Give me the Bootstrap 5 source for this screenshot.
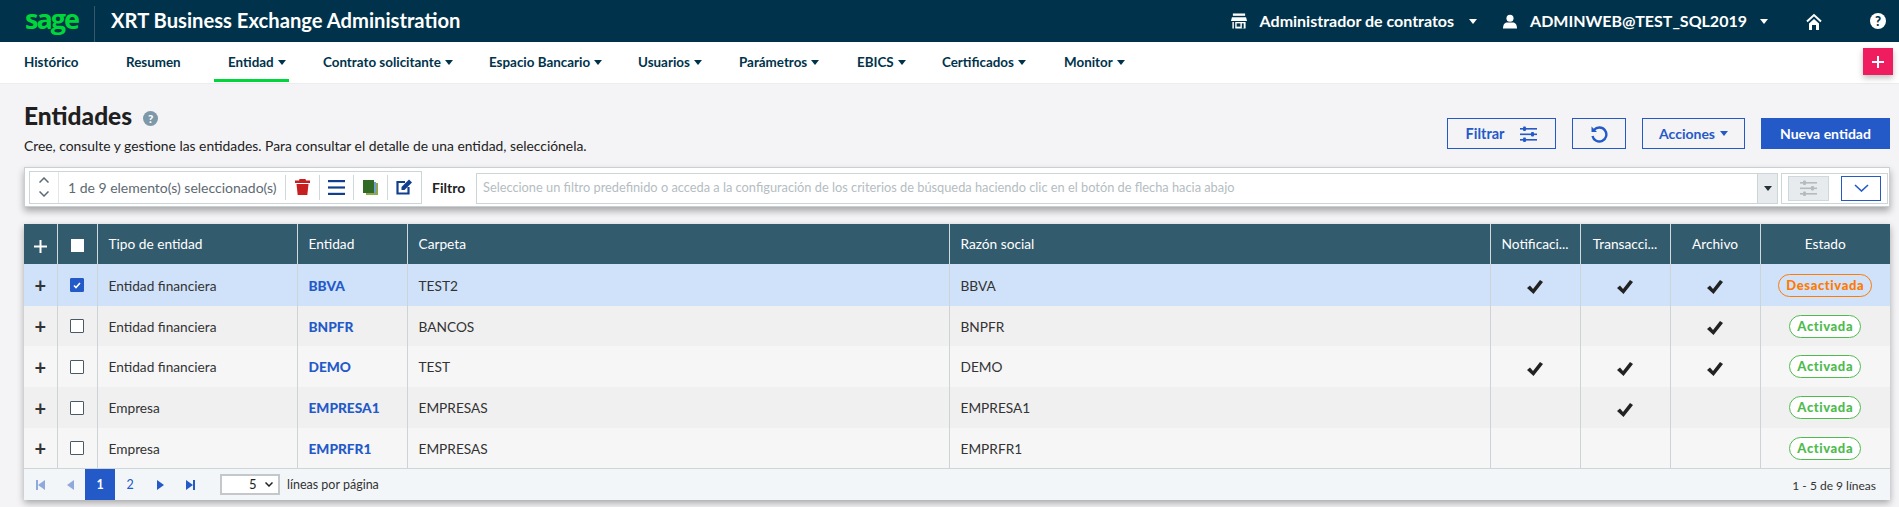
<!DOCTYPE html>
<html lang="es">
<head>
<meta charset="utf-8">
<title>Entidades</title>
<link href="https://cdn.jsdelivr.net/npm/bootstrap@5.3.0/dist/css/bootstrap.min.css" rel="stylesheet">
<style>
html,body{height:507px;overflow:hidden}
body{background:#f4f4f6;font-family:Lato,"Liberation Sans",sans-serif;font-size:14px;color:#222}
.topbar{height:42px;background:#00334b;color:#fff;padding:0 0 0 25px}
.sage-logo{font-family:"Open Sans",sans-serif;font-weight:700;font-size:27px;letter-spacing:-2px;color:#00d639;line-height:42px;width:69px;padding-bottom:5px}
.top-sep{width:1px;height:36px;background:#35586a;margin-top:6px;margin-right:16px;align-self:flex-start}
.app-title{font-weight:700;font-size:20.200px;line-height:1;padding-bottom:2px}
.top-item{font-weight:700;font-size:16px;line-height:1}
.top-caret{display:inline-block;border-left:4px solid transparent;border-right:4px solid transparent;border-top:5px solid #fff;margin-left:13px}
.menu-bar{height:42px;background:#fff;border-bottom:1px solid #ececee}
.menu-link{font-size:13.400px;font-weight:700;color:#00334b;padding:0;line-height:41px;height:40px;text-decoration:none;white-space:nowrap}
.menu-slot{position:relative;display:flex;justify-content:flex-start;height:40px}
.menu-slot.is-on::after{content:"";position:absolute;left:-14px;right:-14px;bottom:0;height:3px;background:#00d639}
.menu-caret{display:inline-block;border-left:4px solid transparent;border-right:4px solid transparent;border-top:5px solid #00334b;margin-left:4px;vertical-align:2px}
.add-btn{position:absolute;left:1863px;top:48px;width:30px;height:27px;background:#ef1d5f;box-shadow:0 3px 6px rgba(0,0,0,.25);color:#fff;z-index:3}
.page-body{padding:0 9px 0 24px}
.page-head{height:83px}
.page-title{font-size:24.500px;font-weight:900;line-height:28px;margin:18px 0 0;color:#1f1f1f}
.help-dot{width:15px;height:15px;border-radius:50%;background:#7d98a8;color:#fff;font-size:11.500px;font-weight:900;line-height:15px;text-align:center;margin:5px 0 0 11px}
.page-sub{font-size:13.850px;line-height:18px;margin:7px 0 0;color:#222}
.head-btn{height:31px;border:1px solid #2459c8;border-radius:0;color:#2459c8;background:transparent;font-weight:700;font-size:14px;padding:0;display:flex;align-items:center;justify-content:center}
.head-btn.solid{background:#2459c8;color:#fff}
.btn-f{width:109px;gap:16px;font-size:14.500px}.btn-r{width:54px}.btn-a{width:103px}.btn-n{width:129px}
.filter-bar{height:40px;background:#fff;border:1px solid #c9d0d3;box-shadow:0 4px 7px rgba(0,0,0,.32);padding:3px 4px;margin-bottom:17px}
.sel-box{width:393px;height:33px;border:1px solid #ccd6d9;flex:none}
.sel-arrows{width:29px;border-right:1px solid #e1e6e8;height:100%}
.sel-text{width:227px;padding-left:9px;font-size:14px;color:#5d6a72;white-space:nowrap;height:100%}
.sel-icon{width:34px;height:25px;border-left:1px solid #cfd8dc}
.filt-label{font-weight:700;font-size:14px;width:54px;padding-left:10px;flex:none;color:#222}
.filt-input{width:1302px;height:31px;border:1px solid #ccd6d9;flex:none;padding-left:6px;color:#b4bdc2;font-size:12.800px;white-space:nowrap;margin-top:2px}
.filt-arrow{width:20px;height:100%;background:#e7ebed;border-left:1px solid #ccd6d9}
.dark-caret{display:inline-block;border-left:4px solid transparent;border-right:4px solid transparent;border-top:5px solid #263238}
.filt-right{width:107px;height:31px;border:1px solid #ccd6d9;flex:none;margin-left:3px;margin-top:2px;padding:0 6px;gap:12px}
.mini-gray{width:41px;height:25px;background:#e7ebed;border:1px solid #cfd8dc}
.mini-blue{width:40px;height:25px;border:1px solid #2459c8;background:#fff}
.grid-wrap{box-shadow:0 3px 7px rgba(0,0,0,.32);width:1866px;background:#f3f6f8}
.grid-table{table-layout:fixed;width:1866px;margin:0;font-size:13.700px;--bs-table-bg:transparent;border-collapse:collapse}
.grid-table th{height:40px;background:#335b6e;color:#fff;font-weight:400;font-size:13.700px;padding:0 11px;vertical-align:middle;border:0;border-left:1px solid #cfd9de;white-space:nowrap;overflow:hidden;text-overflow:ellipsis}
.grid-table td{padding:2px 11px 0;vertical-align:middle;border:0;border-left:1px solid #ccd4d8;color:#333;background:transparent;white-space:nowrap}
.grid-table th:first-child,.grid-table td:first-child{border-left:0;padding:0;text-align:center}
.grid-table th:nth-child(-n+2){padding-top:3px}
.grid-table td:nth-child(2),.grid-table td:last-child{padding-top:0}
.grid-table tbody tr:nth-child(1){height:42px;background:#cfe2fa}
.grid-table tbody tr:nth-child(2){height:40px;background:#f0f0f0}
.grid-table tbody tr:nth-child(3){height:41px;background:#f6f6f7}
.grid-table tbody tr:nth-child(4){height:41px;background:#f0f0f1}
.grid-table tbody tr:nth-child(5){height:40px;background:#f6f6f7}
.cen{text-align:center}
.ent-link{font-weight:900;color:#2459c8;text-decoration:none}
.row-plus{font-size:20px;font-weight:700;line-height:1;color:#222}
.tick-box{display:block;width:14px;height:14px;border:1px solid #4a5a64;background:#fff;border-radius:1px;margin:0 auto;padding:0}
.tick-box.is-on{background:#2459c8;border-color:#2459c8}
.head-box{display:block;width:13px;height:13px;background:#fff;margin:0 auto}
.state-pill{display:inline-block;font-size:13px;font-weight:900;letter-spacing:.600px;border-radius:12px;background:#fff;padding:0 7px;line-height:21px;border:1px solid #4fbb4f;color:#4fbb4f}
.state-pill.off{background:transparent;border-color:#ff7a00;color:#ff7a00}
.grid-foot{height:32px;border-top:1px solid #cfd6da;padding-right:14px;padding-left:1px;font-size:12.500px;color:#333}
.pg-cell{width:30px;height:100%;color:#2459c8}
.pg-cell.on{background:#2459c8;color:#fff;font-weight:700;padding-top:2px}
.pg-num{padding-top:2px}
.foot-txt{padding-top:2px}
.size-sel{width:60px;height:21px;border:2px solid #c4c8ca;background:#fff;margin-left:15px;margin-right:7px;font-size:13px;padding-left:27px;color:#222}
</style>
</head>
<body>
<header class="topbar d-flex align-items-center">
  <div class="sage-logo">sage</div>
  <div class="top-sep"></div>
  <div class="app-title">XRT Business Exchange Administration</div>
  <div class="ms-auto d-flex align-items-center top-item" style="margin-right:13px">
    <svg width="16" height="16" viewBox="0 0 17 16" fill="#fff" style="margin-right:13px"><rect x="2" y="0" width="13" height="2.500"/><path d="M1 4h15l1 4H0z"/><path d="M1.500 9H3v7H1.500zM4.500 9h11v7h-11z"/><rect x="6" y="10.500" width="4" height="3.500" fill="#00334b"/><rect x="11.500" y="10.500" width="2" height="5.500" fill="#00334b"/></svg>
    <span>Administrador de contratos</span><span class="top-caret" style="margin-left:15px"></span>
    <svg width="14" height="15" viewBox="0 0 15 15" fill="#fff" style="margin-left:26px;margin-right:13px"><circle cx="7.500" cy="4" r="3.800"/><path d="M0 15c0-5 2.500-6.500 4.500-6.500h6C12.500 8.500 15 10 15 15z"/></svg>
    <span>ADMINWEB@TEST_SQL2019</span><span class="top-caret"></span>
    <svg width="16" height="17" viewBox="0 0 16 17" style="margin-left:38px"><path d="M1 8.500 8 2l7 6.500" fill="none" stroke="#fff" stroke-width="2"/><path d="M3 10.500 8 6l5 4.500V17h-3v-5H6v5H3z" fill="#fff"/></svg>
    <svg width="16" height="16" viewBox="0 0 17 17" style="margin-left:48px"><circle cx="8.500" cy="8.500" r="8.500" fill="#fff"/><text x="8.500" y="13.500" text-anchor="middle" font-family="Lato" font-weight="900" font-size="14" fill="#00334b">?</text></svg>
  </div>
</header>
<nav class="menu-bar d-flex" aria-label="Principal">
  <div class="menu-slot" style="margin-left:24px;width:102px"><a class="menu-link" href="#">Histórico</a></div>
  <div class="menu-slot" style="width:102px"><a class="menu-link" href="#">Resumen</a></div>
  <div class="menu-slot is-on" style="width:47px;margin-right:48px"><a class="menu-link" href="#">Entidad<span class="menu-caret"></span></a></div>
  <div class="menu-slot" style="width:166px"><a class="menu-link" href="#">Contrato solicitante<span class="menu-caret"></span></a></div>
  <div class="menu-slot" style="width:149px"><a class="menu-link" href="#">Espacio Bancario<span class="menu-caret"></span></a></div>
  <div class="menu-slot" style="width:101px"><a class="menu-link" href="#">Usuarios<span class="menu-caret"></span></a></div>
  <div class="menu-slot" style="width:118px"><a class="menu-link" href="#">Parámetros<span class="menu-caret"></span></a></div>
  <div class="menu-slot" style="width:85px"><a class="menu-link" href="#">EBICS<span class="menu-caret"></span></a></div>
  <div class="menu-slot" style="width:122px"><a class="menu-link" href="#">Certificados<span class="menu-caret"></span></a></div>
  <div class="menu-slot"><a class="menu-link" href="#">Monitor<span class="menu-caret"></span></a></div>
</nav>
<button class="add-btn btn p-0 border-0 rounded-0 d-flex align-items-center justify-content-center" type="button" aria-label="Añadir"><svg width="12" height="12" viewBox="0 0 12 12"><path d="M5 0h2v5h5v2H7v5H5V7H0V5h5z" fill="#fff"/></svg></button>
<main class="page-body">
  <div class="page-head d-flex justify-content-between">
    <div>
      <h1 class="page-title d-flex align-items-center">Entidades<span class="help-dot">?</span></h1>
      <p class="page-sub">Cree, consulte y gestione las entidades. Para consultar el detalle de una entidad, selecciónela.</p>
    </div>
    <div class="d-flex align-items-end" style="gap:16px;padding-bottom:18px">
      <button class="head-btn btn-f" type="button">Filtrar
        <svg width="17" height="16" viewBox="0 0 17 16" fill="#2459c8"><rect y="2" width="17" height="1.600"/><rect y="7.500" width="17" height="1.600"/><rect y="13" width="17" height="1.600"/><rect x="3" y="0.500" width="3" height="4.500" rx="1"/><rect x="11" y="6" width="3" height="4.500" rx="1"/><rect x="3" y="11.500" width="3" height="4.500" rx="1"/></svg></button>
      <button class="head-btn btn-r" type="button" aria-label="Recargar"><svg width="18" height="18" viewBox="0 0 18 18" fill="none" stroke="#2459c8" stroke-width="2.400"><path d="M4 5a7 7 0 1 1-1.500 6"/><path d="M1.500 1.500 1.500 7 7 7z" fill="#2459c8" stroke="none"/></svg></button>
      <button class="head-btn btn-a" type="button">Acciones<span class="menu-caret" style="border-top-color:#2459c8;margin-left:5px;vertical-align:0"></span></button>
      <button class="head-btn btn-n solid" type="button">Nueva entidad</button>
    </div>
  </div>
  <section class="filter-bar d-flex align-items-center">
    <div class="sel-box d-flex align-items-center">
      <div class="sel-arrows d-flex flex-column align-items-center justify-content-center gap-2">
        <svg width="10" height="6" viewBox="0 0 10 6" fill="none" stroke="#5a6b75" stroke-width="1.500"><path d="M.500 5.500 5 1l4.500 4.500"/></svg>
        <svg width="10" height="6" viewBox="0 0 10 6" fill="none" stroke="#5a6b75" stroke-width="1.500"><path d="M.500.500 5 5 9.500.500"/></svg>
      </div>
      <div class="sel-text d-flex align-items-center">1 de 9 elemento(s) seleccionado(s)</div>
      <div class="sel-icon d-flex align-items-center justify-content-center"><svg width="15" height="16" viewBox="0 0 15 16" fill="#c71f1f"><path d="M4.500 0h6l.5 1.500h4V4H0V1.500h4z"/><path d="M1.500 5h12l-1.200 11H2.700z"/></svg></div>
      <div class="sel-icon d-flex align-items-center justify-content-center"><svg width="17" height="15" viewBox="0 0 17 15" fill="#113f8e"><rect width="17" height="2.200"/><rect y="6.400" width="17" height="2.200"/><rect y="12.800" width="17" height="2.200"/></svg></div>
      <div class="sel-icon d-flex align-items-center justify-content-center"><svg width="15" height="15" viewBox="0 0 15 15"><rect x="3" y="3" width="12" height="12" fill="#8fa84f"/><rect x="11" y="2" width="2" height="11" fill="#6f9ed0"/><rect width="11" height="13" fill="#2f6b24"/></svg></div>
      <div class="sel-icon d-flex align-items-center justify-content-center"><svg width="17" height="16" viewBox="0 0 17 16"><path d="M9 3H1.500v11.500h11V8" fill="none" stroke="#113f8e" stroke-width="2.200"/><path d="M5.500 8 13 .5l3 3L8.500 11H5.500z" fill="#113f8e"/></svg></div>
    </div>
    <div class="filt-label">Filtro</div>
    <div class="filt-input d-flex align-items-center justify-content-between pe-0">
      <span>Seleccione un filtro predefinido o acceda a la configuración de los criterios de búsqueda haciendo clic en el botón de flecha hacia abajo</span>
      <span class="filt-arrow d-flex align-items-center justify-content-center"><span class="dark-caret"></span></span>
    </div>
    <div class="filt-right d-flex align-items-center">
      <span class="mini-gray d-flex align-items-center justify-content-center"><svg width="17" height="16" viewBox="0 0 17 16" fill="#b4babd"><rect y="2" width="17" height="1.600"/><rect y="7.500" width="17" height="1.600"/><rect y="13" width="17" height="1.600"/><rect x="3" y="0.500" width="3" height="4.500" rx="1"/><rect x="11" y="6" width="3" height="4.500" rx="1"/><rect x="3" y="11.500" width="3" height="4.500" rx="1"/></svg></span>
      <span class="mini-blue d-flex align-items-center justify-content-center"><svg width="15" height="8" viewBox="0 0 15 8" fill="none" stroke="#2459c8" stroke-width="1.600"><path d="M1 1l6.500 6L14 1"/></svg></span>
    </div>
  </section>
  <section class="grid-wrap">
    <table class="table grid-table">
      <colgroup><col style="width:33px"><col style="width:40px"><col style="width:200px"><col style="width:110px"><col style="width:542px"><col style="width:541px"><col style="width:90px"><col style="width:90px"><col style="width:90px"><col style="width:130px"></colgroup>
      <thead><tr>
        <th><svg width="13" height="13" viewBox="0 0 13 13"><path d="M5.500 0h2v5.500H13v2H7.500V13h-2V7.500H0v-2h5.500z" fill="#fff"/></svg></th>
        <th><span class="head-box"></span></th>
        <th>Tipo de entidad</th><th>Entidad</th><th>Carpeta</th><th>Razón social</th>
        <th class="cen">Notificaci...</th><th class="cen">Transacci...</th><th class="cen">Archivo</th><th class="cen">Estado</th>
      </tr></thead>
      <tbody>
        <tr><td class="row-plus">+</td><td><span class="tick-box is-on d-flex align-items-center justify-content-center"><svg width="8" height="7" viewBox="0 0 8 7" fill="none" stroke="#fff" stroke-width="1.600"><path d="M1 3.500 3 5.500 7 1"/></svg></span></td><td>Entidad financiera</td><td><a class="ent-link" href="#">BBVA</a></td><td>TEST2</td><td>BBVA</td>
          <td class="cen"><svg width="16" height="14" viewBox="0 0 16 14"><path d="M0 8 3 5.500 6 9l7-9 3 2L6.500 14z" fill="#222"/></svg></td><td class="cen"><svg width="16" height="14" viewBox="0 0 16 14"><path d="M0 8 3 5.500 6 9l7-9 3 2L6.500 14z" fill="#222"/></svg></td><td class="cen"><svg width="16" height="14" viewBox="0 0 16 14"><path d="M0 8 3 5.500 6 9l7-9 3 2L6.500 14z" fill="#222"/></svg></td><td class="cen"><span class="state-pill off">Desactivada</span></td></tr>
        <tr><td class="row-plus">+</td><td><span class="tick-box"></span></td><td>Entidad financiera</td><td><a class="ent-link" href="#">BNPFR</a></td><td>BANCOS</td><td>BNPFR</td>
          <td></td><td></td><td class="cen"><svg width="16" height="14" viewBox="0 0 16 14"><path d="M0 8 3 5.500 6 9l7-9 3 2L6.500 14z" fill="#222"/></svg></td><td class="cen"><span class="state-pill">Activada</span></td></tr>
        <tr><td class="row-plus">+</td><td><span class="tick-box"></span></td><td>Entidad financiera</td><td><a class="ent-link" href="#">DEMO</a></td><td>TEST</td><td>DEMO</td>
          <td class="cen"><svg width="16" height="14" viewBox="0 0 16 14"><path d="M0 8 3 5.500 6 9l7-9 3 2L6.500 14z" fill="#222"/></svg></td><td class="cen"><svg width="16" height="14" viewBox="0 0 16 14"><path d="M0 8 3 5.500 6 9l7-9 3 2L6.500 14z" fill="#222"/></svg></td><td class="cen"><svg width="16" height="14" viewBox="0 0 16 14"><path d="M0 8 3 5.500 6 9l7-9 3 2L6.500 14z" fill="#222"/></svg></td><td class="cen"><span class="state-pill">Activada</span></td></tr>
        <tr><td class="row-plus">+</td><td><span class="tick-box"></span></td><td>Empresa</td><td><a class="ent-link" href="#">EMPRESA1</a></td><td>EMPRESAS</td><td>EMPRESA1</td>
          <td></td><td class="cen"><svg width="16" height="14" viewBox="0 0 16 14"><path d="M0 8 3 5.500 6 9l7-9 3 2L6.500 14z" fill="#222"/></svg></td><td></td><td class="cen"><span class="state-pill">Activada</span></td></tr>
        <tr><td class="row-plus">+</td><td><span class="tick-box"></span></td><td>Empresa</td><td><a class="ent-link" href="#">EMPRFR1</a></td><td>EMPRESAS</td><td>EMPRFR1</td>
          <td></td><td></td><td></td><td class="cen"><span class="state-pill">Activada</span></td></tr>
      </tbody>
    </table>
    <div class="grid-foot d-flex align-items-center">
      <div class="pg-cell d-flex align-items-center justify-content-center"><svg width="9" height="10" viewBox="0 0 9 10" fill="#8fa9dc"><rect width="2" height="10"/><path d="M9 0v10L2 5z"/></svg></div>
      <div class="pg-cell d-flex align-items-center justify-content-center"><svg width="7" height="10" viewBox="0 0 7 10" fill="#8fa9dc"><path d="M7 0v10L0 5z"/></svg></div>
      <div class="pg-cell on d-flex align-items-center justify-content-center">1</div>
      <div class="pg-cell pg-num d-flex align-items-center justify-content-center">2</div>
      <div class="pg-cell d-flex align-items-center justify-content-center"><svg width="7" height="10" viewBox="0 0 7 10" fill="#2459c8"><path d="M0 0v10l7-5z"/></svg></div>
      <div class="pg-cell d-flex align-items-center justify-content-center"><svg width="9" height="10" viewBox="0 0 9 10" fill="#2459c8"><rect x="7" width="2" height="10"/><path d="M0 0v10l7-5z"/></svg></div>
      <div class="size-sel d-flex align-items-center">5<svg class="ms-2" width="8" height="5" viewBox="0 0 8 5" fill="none" stroke="#222" stroke-width="1.500"><path d="M.500.500 4 4 7.500.500"/></svg></div>
      <span class="foot-txt">líneas por página</span>
      <span class="foot-txt ms-auto" style="font-size:12px">1 - 5 de 9 líneas</span>
    </div>
  </section>
</main>
<script src="https://cdn.jsdelivr.net/npm/bootstrap@5.3.0/dist/js/bootstrap.bundle.min.js"></script>
</body>
</html>
